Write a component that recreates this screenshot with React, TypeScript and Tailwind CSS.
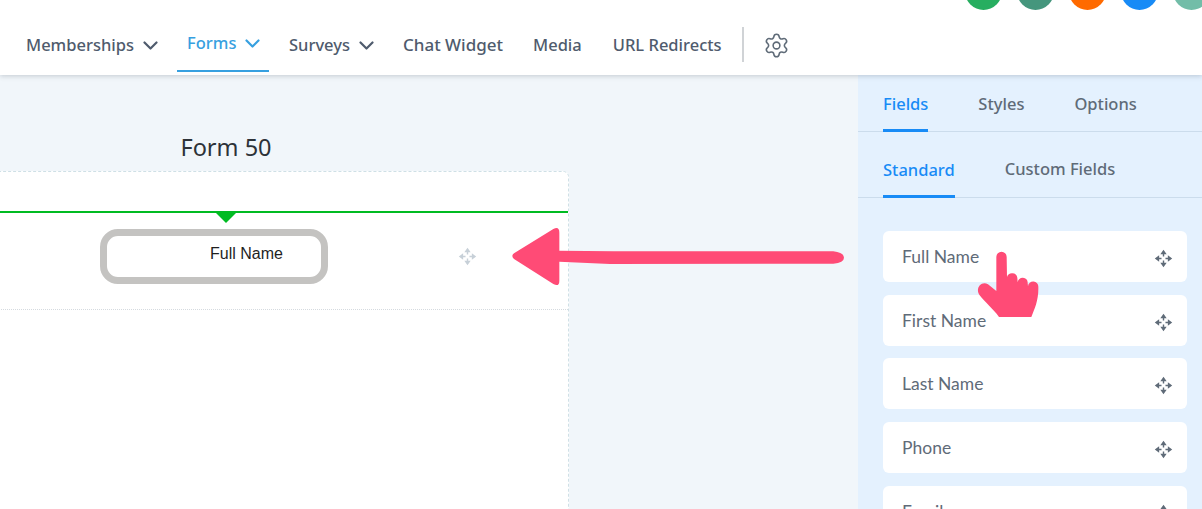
import { Settings } from 'lucide-react'

function MoveIcon({ className }: { className: string }) {
  return (
    <svg viewBox="0 0 24 24" className={className} fill="currentColor">
      <path d="M12 1 L16 6.5 H8 Z M12 23 L8 17.5 H16 Z M1 12 L6.5 8 V16 Z M23 12 L17.5 16 V8 Z" />
      <path d="M12 5 V9.5 M12 14.5 V19 M5 12 H9.5 M14.5 12 H19" stroke="currentColor" strokeWidth="1.8" fill="none" />
    </svg>
  )
}

function Chevron() {
  return (
    <svg viewBox="0 0 15 9" className="ml-[9px] h-[9px] w-[15px]" fill="none" stroke="currentColor" strokeWidth="2.2" strokeLinecap="round" strokeLinejoin="round">
      <path d="M1.5 1.5 L7.5 7.5 L13.5 1.5" />
    </svg>
  )
}

const navItems = [
  { label: 'Memberships', chevron: true, gap: 'mr-[29px] text-[16.5px]' },
  { label: 'Forms', chevron: true, active: true, gap: 'mr-[20px] text-[16.5px]' },
  { label: 'Surveys', chevron: true, gap: 'mr-[29px] text-[16.5px]' },
  { label: 'Chat Widget', gap: 'mr-[30px] text-[17px]' },
  { label: 'Media', gap: 'mr-[31px] text-[16.5px]' },
  { label: 'URL Redirects', gap: 'mr-[20px] text-[16.5px]' },
]

const fields = ['Full Name', 'First Name', 'Last Name', 'Phone', 'Email']

export default function App() {
  return (
    <div className="relative h-[509px] w-[1202px] overflow-hidden bg-white font-['Noto_Sans',sans-serif]">
      {/* ── Top bar ─────────────────────────────────────────────── */}
      <header className="relative z-10 h-[75px] bg-white shadow-[0_1px_5px_rgba(60,70,90,0.25)]">
        <div className="mr-[-8px] flex h-[10px] items-end justify-end gap-[15px]">
          {['bg-[#27ae60]', 'bg-[#45967d]', 'bg-[#ff6a00]', 'bg-[#188bf6]', 'bg-[#72bda8]'].map(c => (
            <div key={c} className={`h-[37px] w-[37px] shrink-0 rounded-full ${c}`} />
          ))}
        </div>
        <nav className="flex h-[62px] items-stretch pl-[26px]">
          {navItems.map(item => (
            <div
              key={item.label}
              className={`flex items-center font-medium ${item.gap} ${
                item.active
                  ? '-ml-[10px] w-[92px] border-b-2 border-[#37a0e0] pt-[6px] pl-[10px] text-[#37a0e0]'
                  : 'pt-[8px] text-[#4f5b6d]'
              }`}
            >
              {item.label}
              {item.chevron && <Chevron />}
            </div>
          ))}
          <div className="mt-[17px] h-[35px] w-[2px] bg-[#d0d3d6]" />
          <div className="ml-[19px] flex items-center pt-[8px]">
            <Settings size={27} strokeWidth={1.4} className="text-[#5f6b78]" />
          </div>
        </nav>
      </header>

      <div className="flex h-[434px]">
        {/* ── Canvas ──────────────────────────────────────────────── */}
        <main className="w-[858px] shrink-0 overflow-hidden bg-[#f1f6fa]">
          <h2 className="-ml-[117px] mt-[56px] w-[686px] text-center text-[23.5px] leading-[32px] text-[#2d3238]">Form 50</h2>
          <div className="-ml-[118px] mt-[8px] h-[400px] w-[687px] rounded-[6px] border border-dashed border-[#cfe0e6] bg-white">
            <div className="relative mt-[39px] border-b-2 border-[#00bb22]">
              <div className="absolute -bottom-[12px] left-[332px] h-0 w-0 border-x-[11px] border-t-[11px] border-x-transparent border-t-[#00bb22]" />
            </div>
            <div className="flex h-[97px] items-center border-b border-dotted border-[#d5dadf] pb-[9px]">
              <div className="ml-[217px] flex h-[55px] w-[228px] items-start rounded-[18px] border-[7px] border-[#c4c3c1] bg-white pt-[8px] pl-[103px] font-['Liberation_Sans',sans-serif] text-[16px] leading-[20px] text-[#1f1f1f]">
                Full Name
              </div>
              <MoveIcon className="ml-[130px] h-[19px] w-[19px] text-[#c7d0d8]" />
            </div>
          </div>
        </main>

        {/* ── Right panel ─────────────────────────────────────────── */}
        <aside className="flex-1 bg-[#e4f1fe]">
          <div className="flex h-[57px] gap-[50px] border-b border-[#cbdcec] pl-[25px] text-[16.5px] font-medium text-[#5f6b78]">
            <span className="-mb-px flex items-center border-b-[3px] border-[#188bf6] pt-[5px] text-[#188bf6]">Fields</span>
            <span className="flex items-center pt-[3px]">Styles</span>
            <span className="flex items-center pt-[3px]">Options</span>
          </div>
          <div className="flex h-[66px] gap-[50px] border-b border-[#cbdcec] pl-[25px] text-[16.5px] font-medium text-[#5f6b78]">
            <span className="-mb-px flex items-center border-b-[3px] border-[#188bf6] pt-[13px] text-[#188bf6]">Standard</span>
            <span className="flex items-center pt-[10px]">Custom Fields</span>
          </div>
          <div className="flex flex-col gap-[12.67px] pt-[33px] pl-[25px] pr-[15px]">
            {fields.map(f => (
              <div key={f} className="flex h-[51px] shrink-0 items-center justify-between rounded-[6px] bg-white pl-[19px] pr-[14px] font-['Lato',sans-serif] text-[17.5px] text-[#5f6b78]">
                <span className="pt-[1px]">{f}</span>
                <MoveIcon className="mt-[4px] h-[19px] w-[19px] text-[#5f6b78]" />
              </div>
            ))}
          </div>
        </aside>
      </div>

      {/* ── Annotations over the screenshot ─────────────────────── */}
      <svg viewBox="30 15 1010 190" className="absolute left-[510px] top-[225px] z-20 h-[63.33px] w-[336.67px]" fill="#ff4b76">
        <path d="M42 100 L160 27 Q178 18 178 38 L178 92 L340 94 L1000 94 Q1032 98 1032 113 Q1032 128 1000 131 L330 132 L178 125 L178 182 Q178 202 160 192 L42 117 Q32 108 42 100 Z" />
      </svg>
      <svg viewBox="340 80 210 220" className="absolute left-[973.33px] top-[246.67px] z-20 h-[73.33px] w-[70px]" fill="#ff4b76">
        <path d="M410 110 A15 15 0 0 1 441 110 L442 170 A16 16 0 0 1 473 172 L474 186 A15 15 0 0 1 504 188 L505 198 A15 15 0 0 1 536 200 C537 240 525 265 515 290 L418 290 C400 265 375 245 360 225 C345 205 365 180 385 192 L410 212 Z" />
      </svg>
    </div>
  )
}
